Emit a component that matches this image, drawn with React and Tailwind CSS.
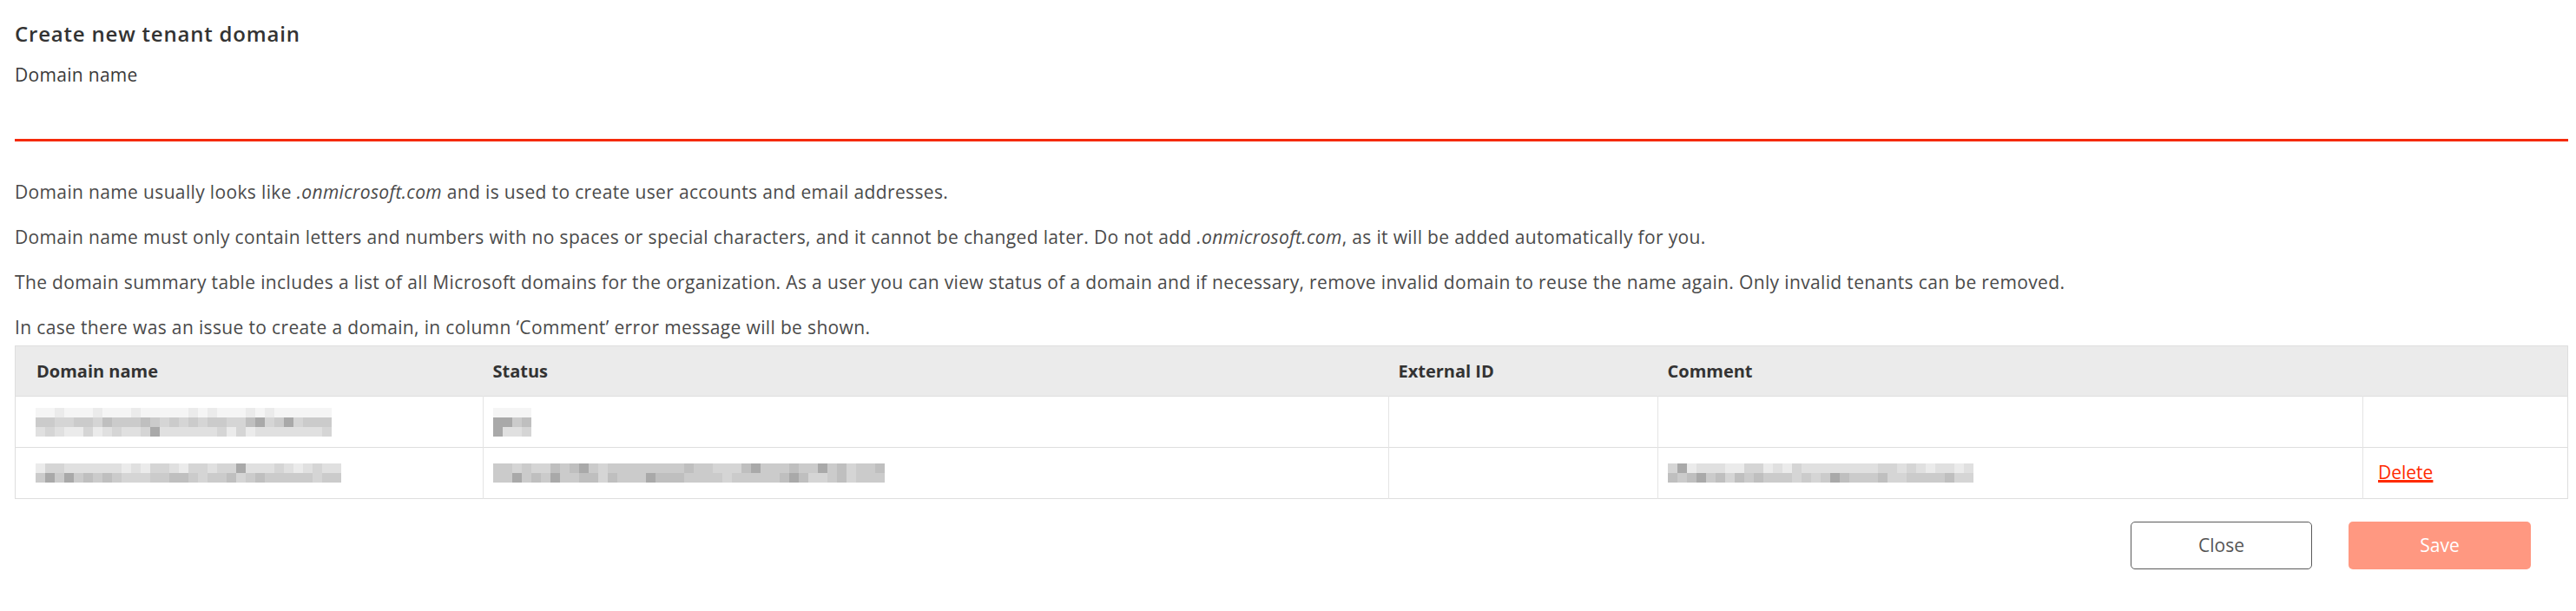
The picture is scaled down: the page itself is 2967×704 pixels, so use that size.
import React from "react";

const SHADES = [
  "bg-[#f5f5f5]",
  "bg-[#ebebeb]",
  "bg-[#e0e0e0]",
  "bg-[#d5d5d5]",
  "bg-[#cbcbcb]",
  "bg-[#bfbfbf]",
  "bg-[#a9a9a9]",
];

// masked values in the screenshot are pixelated, so we draw them as blocks
function makeRow(seed, count, base) {
  let s = seed;
  const out = [];
  for (let i = 0; i < count; i++) {
    s = (s * 9301 + 49297) % 233280;
    const r = s / 233280;
    let v = base + Math.round(r * 2 - 1);
    if (r > 0.95) v = 6;
    out.push(Math.max(0, Math.min(6, v)));
  }
  return out;
}

function Blur({ rows }) {
  return (
    <div className="flex flex-col">
      {rows.map((row, i) => (
        <div key={i} className="flex">
          {row.map((v, j) => (
            <div key={j} className={"w-[11px] h-[11px] " + SHADES[v]} />
          ))}
        </div>
      ))}
    </div>
  );
}

const domains = [
  {
    name: [makeRow(3, 31, 0).map((v) => Math.min(v, 1)), makeRow(7, 31, 4), makeRow(11, 31, 2)],
    status: [makeRow(13, 4, 0).map(() => 0), makeRow(17, 4, 5), makeRow(19, 4, 2)],
    comment: null,
    removable: false,
  },
  {
    name: [makeRow(23, 32, 2), makeRow(29, 32, 4)],
    status: [makeRow(31, 41, 4), makeRow(37, 41, 4)],
    comment: [makeRow(41, 32, 2), makeRow(43, 32, 4)],
    removable: true,
  },
];

function App() {
  return (
    <div
      className="w-[2967px] h-[704px] bg-white pl-[17px] pr-[9px] pt-[24px] text-[#4a4a4a]"
      style={{ fontFamily: "'Open Sans', 'Noto Sans', sans-serif" }}
    >
      <h1 className="text-[24px] leading-[30px] font-semibold tracking-[0.8px] text-[#333333]">
        Create new tenant domain
      </h1>

      {/* Domain name input */}
      <label className="block mt-[17px] text-[21px] leading-[30px] tracking-[0.3px] text-[#3a3a3a]">
        Domain name
      </label>
      <input
        type="text"
        className="block w-full h-[62px] border-b-[3px] border-[#f52a0a] outline-none text-[21px]"
      />

      <div className="mt-[43px] text-[21px] leading-[30px] tracking-[0.35px]">
        <p className="mb-[22px]">
          Domain name usually looks like <i>.onmicrosoft.com</i> and is used to create user
          accounts and email addresses.
        </p>
        <p className="mb-[22px]">
          Domain name must only contain letters and numbers with no spaces or special characters,
          and it cannot be changed later. Do not add <i>.onmicrosoft.com</i>, as it will be added
          automatically for you.
        </p>
        <p className="mb-[22px]">
          The domain summary table includes a list of all Microsoft domains for the organization.
          As a user you can view status of a domain and if necessary, remove invalid domain to
          reuse the name again. Only invalid tenants can be removed.
        </p>
        <p>
          In case there was an issue to create a domain, in column ‘Comment’ error message will be
          shown.
        </p>
      </div>

      {/* Domains table */}
      <table className="mt-[6px] w-full table-fixed border-collapse border border-[#dedede] text-[20px]">
        <thead>
          <tr className="bg-[#ebebeb] h-[58px] text-left text-[#333333]">
            <th className="w-[539px] pl-[24px] font-bold">Domain name</th>
            <th className="w-[1043px] pl-[11px] font-bold">Status</th>
            <th className="w-[310px] pl-[11px] font-bold">External ID</th>
            <th className="w-[812px] pl-[11px] font-bold">Comment</th>
            <th />
          </tr>
        </thead>
        <tbody>
          {domains.map((d, i) => (
            <tr key={i} className="h-[59px] border-t border-[#dedede]">
              <td className="pl-[23px] border-r border-[#e4e4e4]">
                <Blur rows={d.name} />
              </td>
              <td className="pl-[11px] border-r border-[#e4e4e4]">
                <Blur rows={d.status} />
              </td>
              <td className="border-r border-[#e4e4e4]" />
              <td className="pl-[11px] border-r border-[#e4e4e4]">
                {d.comment && <Blur rows={d.comment} />}
              </td>
              <td className="pl-[17px]">
                {d.removable && (
                  <a
                    href="#"
                    className="text-[21px] text-[#ff2a00] underline decoration-[3px] underline-offset-[1px]"
                  >
                    Delete
                  </a>
                )}
              </td>
            </tr>
          ))}
        </tbody>
      </table>

      <div className="flex justify-end gap-[42px] mt-[26px] mr-[43px]">
        <button className="w-[209px] h-[55px] rounded-[5px] border-[1.5px] border-[#5a5a5a] bg-white text-[21px] text-[#555555]">
          Close
        </button>
        <button className="w-[210px] h-[55px] rounded-[5px] bg-[#ff9881] text-[21px] text-white">
          Save
        </button>
      </div>
    </div>
  );
}

export default App;
